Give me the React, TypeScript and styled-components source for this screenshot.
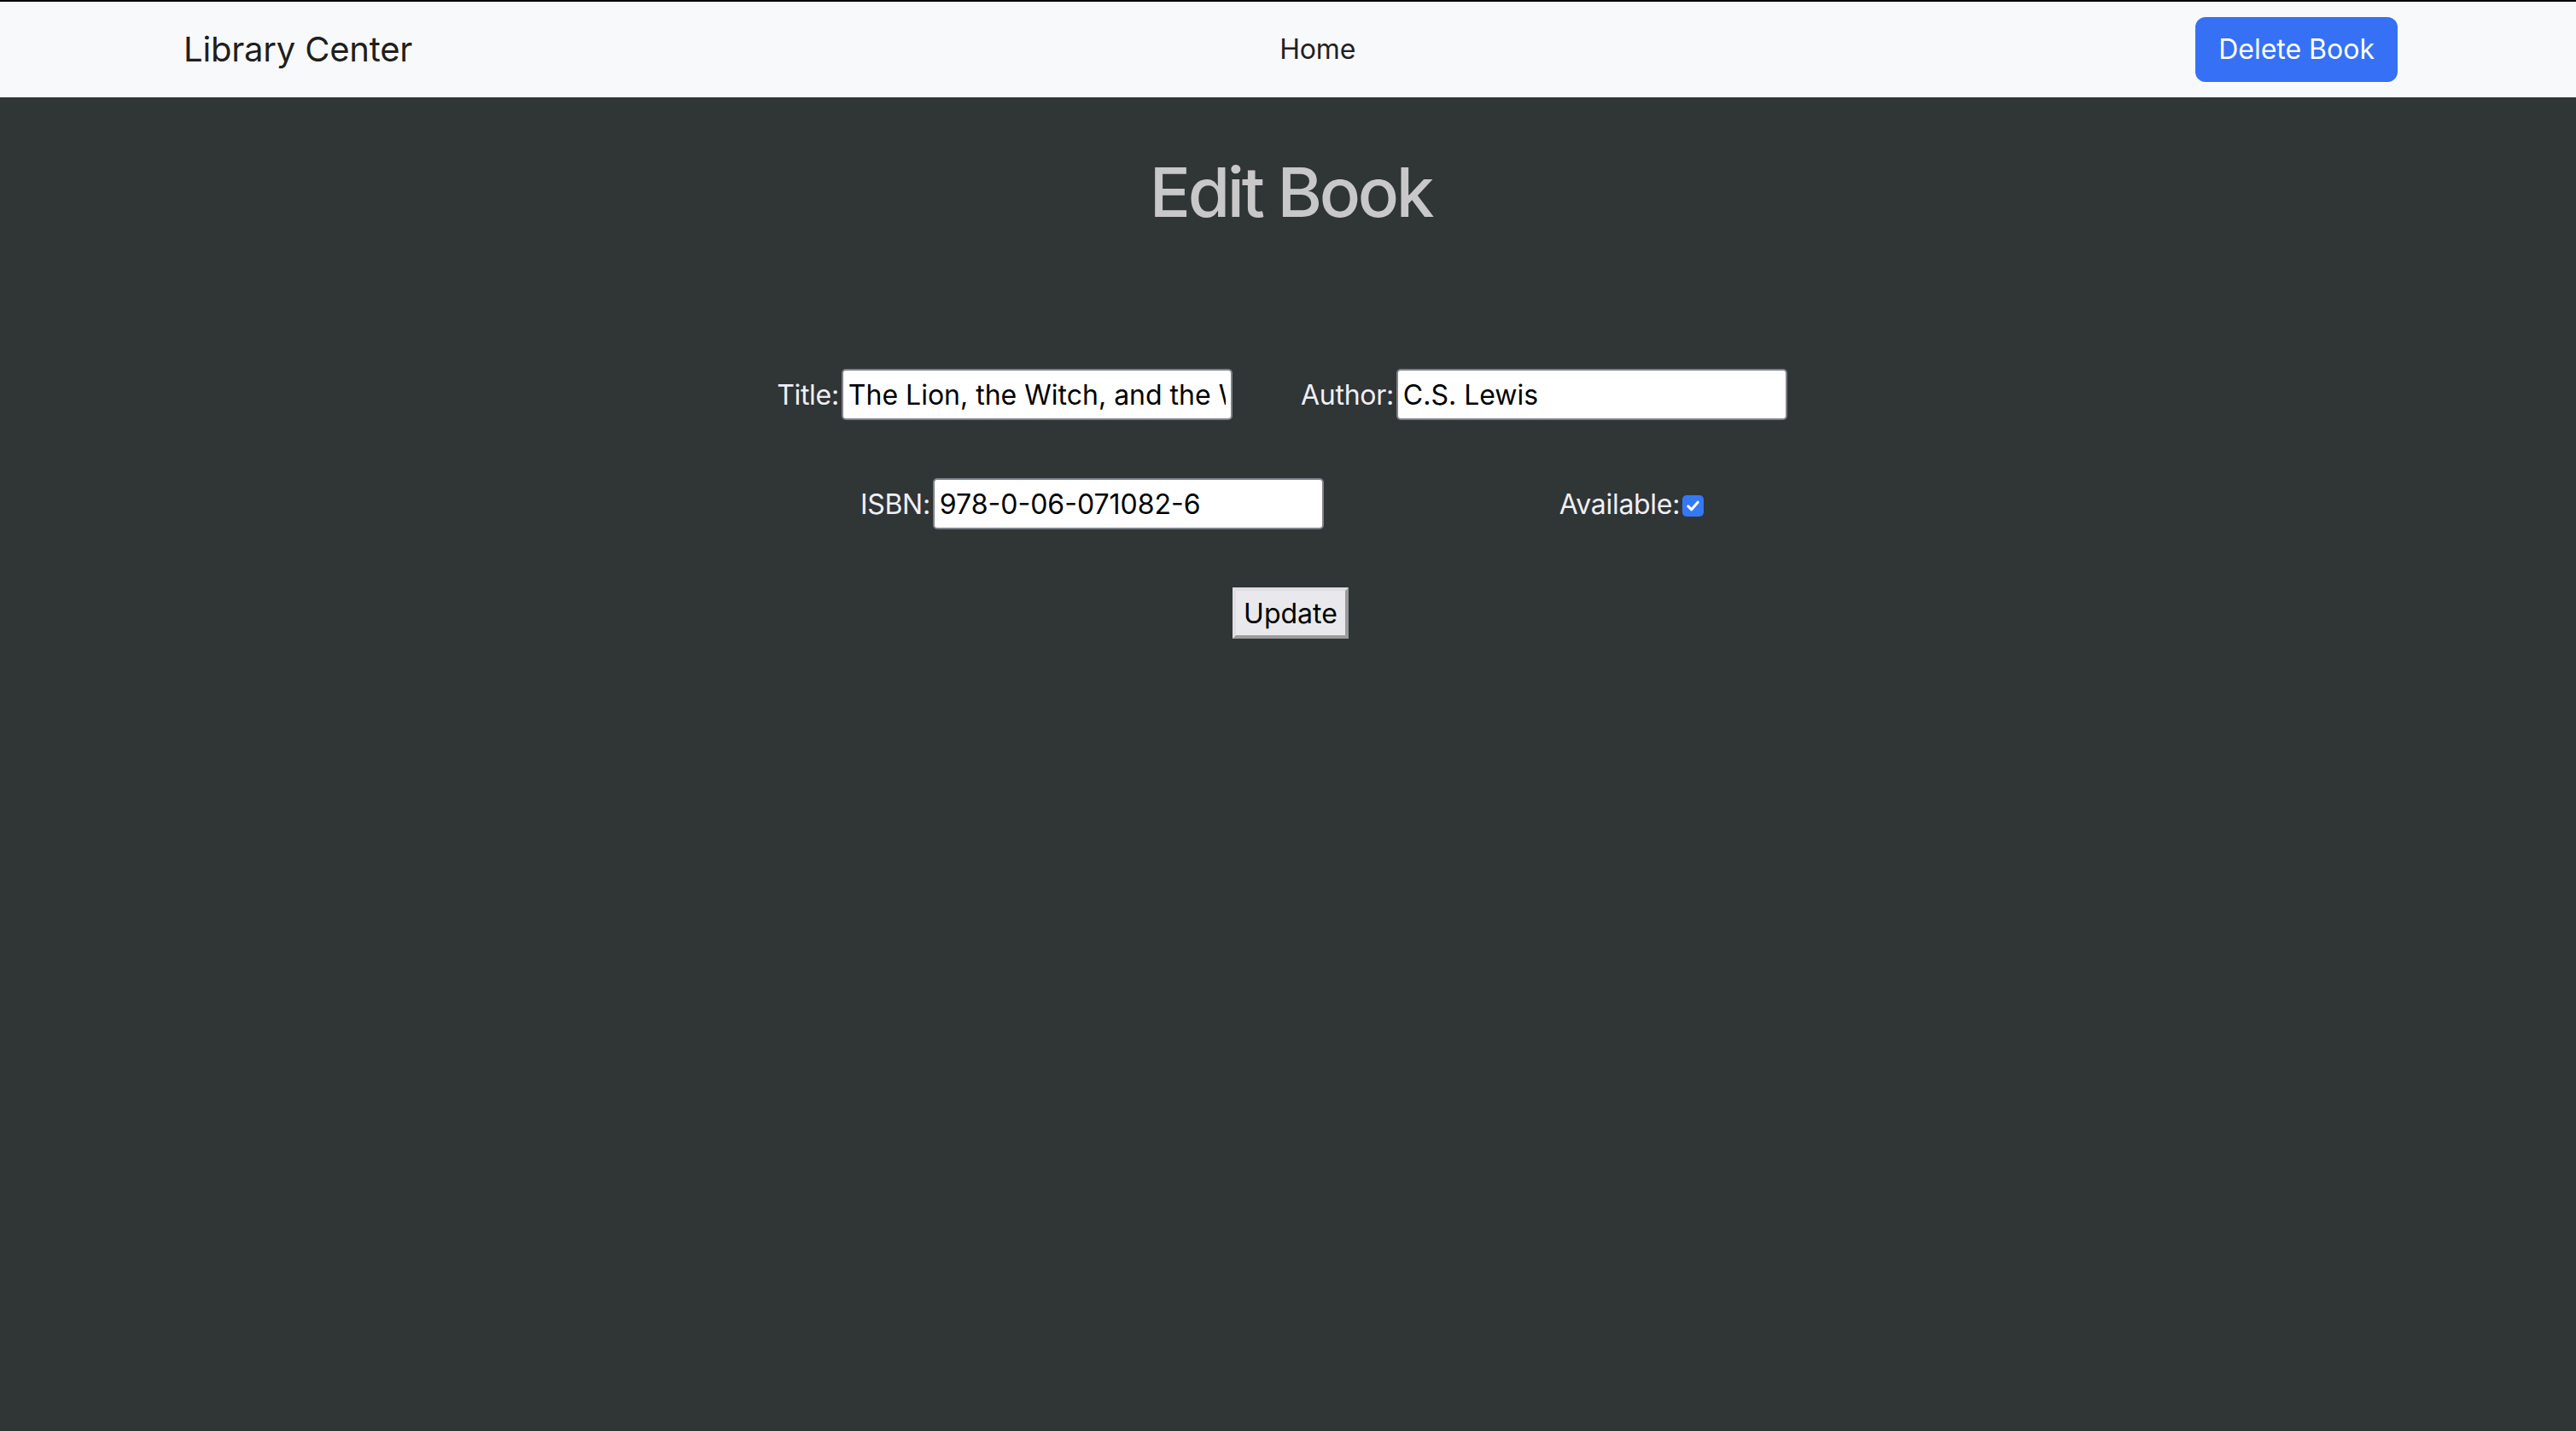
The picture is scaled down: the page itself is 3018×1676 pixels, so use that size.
import React from "react";
import styled, { createGlobalStyle } from "styled-components";

const GlobalStyle = createGlobalStyle`
  * { box-sizing: border-box; }
  html, body { margin: 0; padding: 0; }
  body {
    background: #303536;
    min-height: 100vh;
    font-family: Inter, "Noto Sans", sans-serif;
  }
`;

const Page = styled.div`
  min-height: 100vh;
  border-top: 2px solid #000;
  background: #303536;
`;

const NavBar = styled.nav`
  background: #f8f9fa;
  padding: 16px 0;
`;

const NavInner = styled.div`
  max-width: 2646px;
  margin: 0 auto;
  padding: 0 23px 0 29px;
  display: flex;
  align-items: center;
  justify-content: space-between;
`;

const Brand = styled.a`
  font-family: Inter, "Noto Sans", sans-serif;
  font-size: 40px;
  line-height: 60px;
  padding: 10px 0;
  margin-right: 32px;
  color: rgba(0, 0, 0, 0.9);
  text-decoration: none;
  letter-spacing: -0.2px;
`;

const NavLink = styled.a`
  font-family: Inter, "Noto Sans", sans-serif;
  font-size: 32px;
  line-height: 48px;
  color: #222;
  text-decoration: none;
  letter-spacing: -0.2px;
`;

const DangerButton = styled.button`
  font-family: Inter, "Noto Sans", sans-serif;
  font-size: 32px;
  line-height: 48px;
  padding: 12px 25px;
  border: 2px solid #3671f5;
  border-radius: 12px;
  background: #3671f5;
  color: #fff;
  cursor: pointer;
`;

const Main = styled.main`
  display: flex;
  flex-direction: column;
  align-items: center;
  padding-left: 6px;
`;

const Heading = styled.h1`
  margin: 63px 0 0;
  font-family: Inter, "Noto Sans", sans-serif;
  font-weight: 500;
  font-size: 80px;
  line-height: 96px;
  letter-spacing: -3.3px;
  color: #c8c8c8;
  text-align: center;
`;

const Form = styled.form`
  margin-top: 159px;
  display: flex;
  flex-direction: column;
  align-items: center;
  gap: 68px;
  width: 100%;
`;

const Row = styled.div`
  width: 1264px;
  margin-left: -20px;
  display: flex;
  justify-content: space-around;
  align-items: baseline;
`;

const Field = styled.label`
  display: inline-flex;
  align-items: baseline;
  gap: 3px;
`;

const LabelText = styled.span`
  font-family: Inter, "Noto Sans", sans-serif;
  font-size: 32px;
  color: #eef0f6;
  letter-spacing: -0.3px;
`;

const TextInput = styled.input`
  width: 458px;
  height: 60px;
  padding: 0 6px;
  border: 2px solid #80808a;
  border-radius: 5px;
  background: #fff;
  color: #000;
  font-family: Inter, "Noto Sans", sans-serif;
  font-size: 32px;
  outline: none;
`;

const CheckBox = styled.span`
  width: 25px;
  height: 25px;
  border-radius: 5px;
  background: #3478f6;
  display: inline-flex;
  align-items: center;
  justify-content: center;
`;

const SubmitButton = styled.button`
  height: 60px;
  padding: 0 9px;
  border-style: solid;
  border-width: 4px;
  border-color: #dfdfe3 #9b9b9b #9b9b9b #dfdfe3;
  background: #e9e9ed;
  color: #000;
  font-family: Inter, "Noto Sans", sans-serif;
  font-size: 32px;
  border-radius: 0;
  cursor: pointer;
`;

export default function App() {
  return (
    <>
      <GlobalStyle />
      <Page>
        <NavBar>
          <NavInner>
            <Brand href="#">Library Center</Brand>
            <NavLink href="#">Home</NavLink>
            <DangerButton type="button">Delete Book</DangerButton>
          </NavInner>
        </NavBar>
        <Main>
          <Heading>Edit Book</Heading>
          <Form onSubmit={(e) => e.preventDefault()}>
            <Row>
              <Field>
                <LabelText>Title:</LabelText>
                <TextInput
                  type="text"
                  defaultValue="The Lion, the Witch, and the Wardrobe"
                />
              </Field>
              <Field>
                <LabelText>Author:</LabelText>
                <TextInput type="text" defaultValue="C.S. Lewis" />
              </Field>
            </Row>
            <Row>
              <Field>
                <LabelText>ISBN:</LabelText>
                <TextInput type="text" defaultValue="978-0-06-071082-6" />
              </Field>
              <Field>
                <LabelText>Available:</LabelText>
                <CheckBox role="checkbox" aria-checked="true">
                  <svg width="19" height="19" viewBox="0 0 20 20" fill="none">
                    <path
                      d="M4 10.5 L8.2 14.5 L16 5.5"
                      stroke="#fff"
                      strokeWidth="3.2"
                      strokeLinecap="round"
                      strokeLinejoin="round"
                    />
                  </svg>
                </CheckBox>
              </Field>
            </Row>
            <SubmitButton type="submit">Update</SubmitButton>
          </Form>
        </Main>
      </Page>
    </>
  );
}
